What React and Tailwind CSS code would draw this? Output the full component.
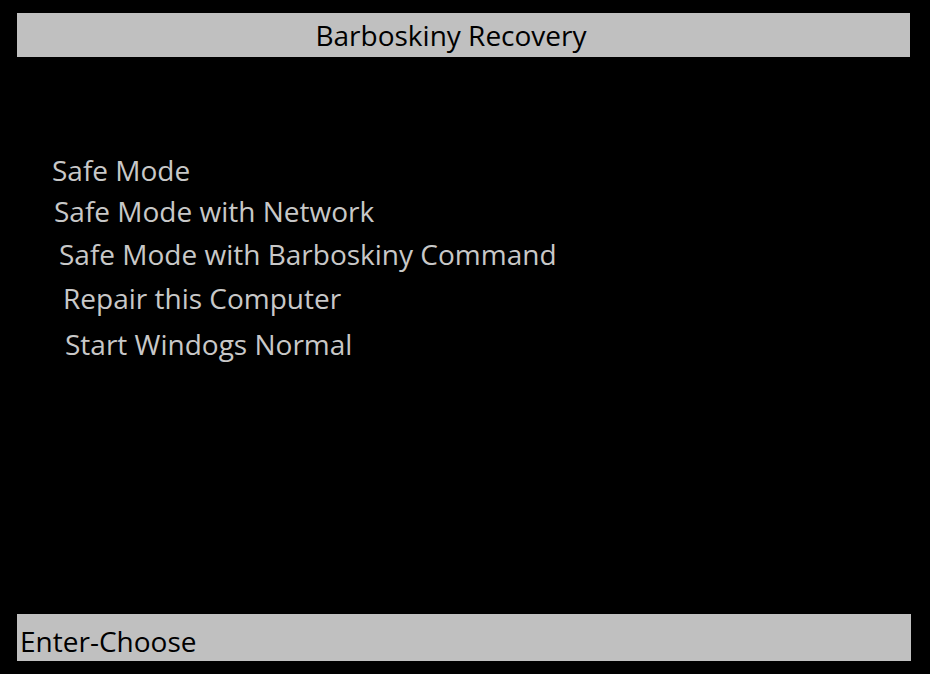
import React from 'react';

const items = [
  { label: 'Safe Mode', className: 'pl-[52px] h-[40px]' },
  { label: 'Safe Mode with Network', className: 'pl-[54px] h-[42px]' },
  { label: 'Safe Mode with Barboskiny Command', className: 'pl-[59px] h-[44px]' },
  { label: 'Repair this Computer', className: 'pl-[63px] h-[44px]' },
  { label: 'Start Windogs Normal', className: 'pl-[65px] h-[48px]' },
];

function App() {
  return (
    <div className="h-[674px] w-[930px] bg-black flex flex-col font-['Open_Sans',sans-serif]">
      <div className="mt-[13px] ml-[17px] mr-[20px] h-[44px] bg-[#c0c0c0] flex items-center justify-center">
        <span className="text-[28px] leading-none text-black pr-[25px]">Barboskiny Recovery</span>
      </div>

      {/* menu */}
      <div className="mt-[93px] flex flex-col text-[28px] text-[#c8c8c8]">
        {items.map(item => (
          <div key={item.label} className={'flex items-center ' + item.className}>
            {item.label}
          </div>
        ))}
      </div>

      <div className="mt-auto mb-[13px] ml-[17px] mr-[19px] h-[47px] bg-[#c0c0c0] flex items-center pl-[3px] pt-[6px]">
        <span className="text-[28px] leading-none text-black">Enter-Choose</span>
      </div>
    </div>
  );
}

export default App;
